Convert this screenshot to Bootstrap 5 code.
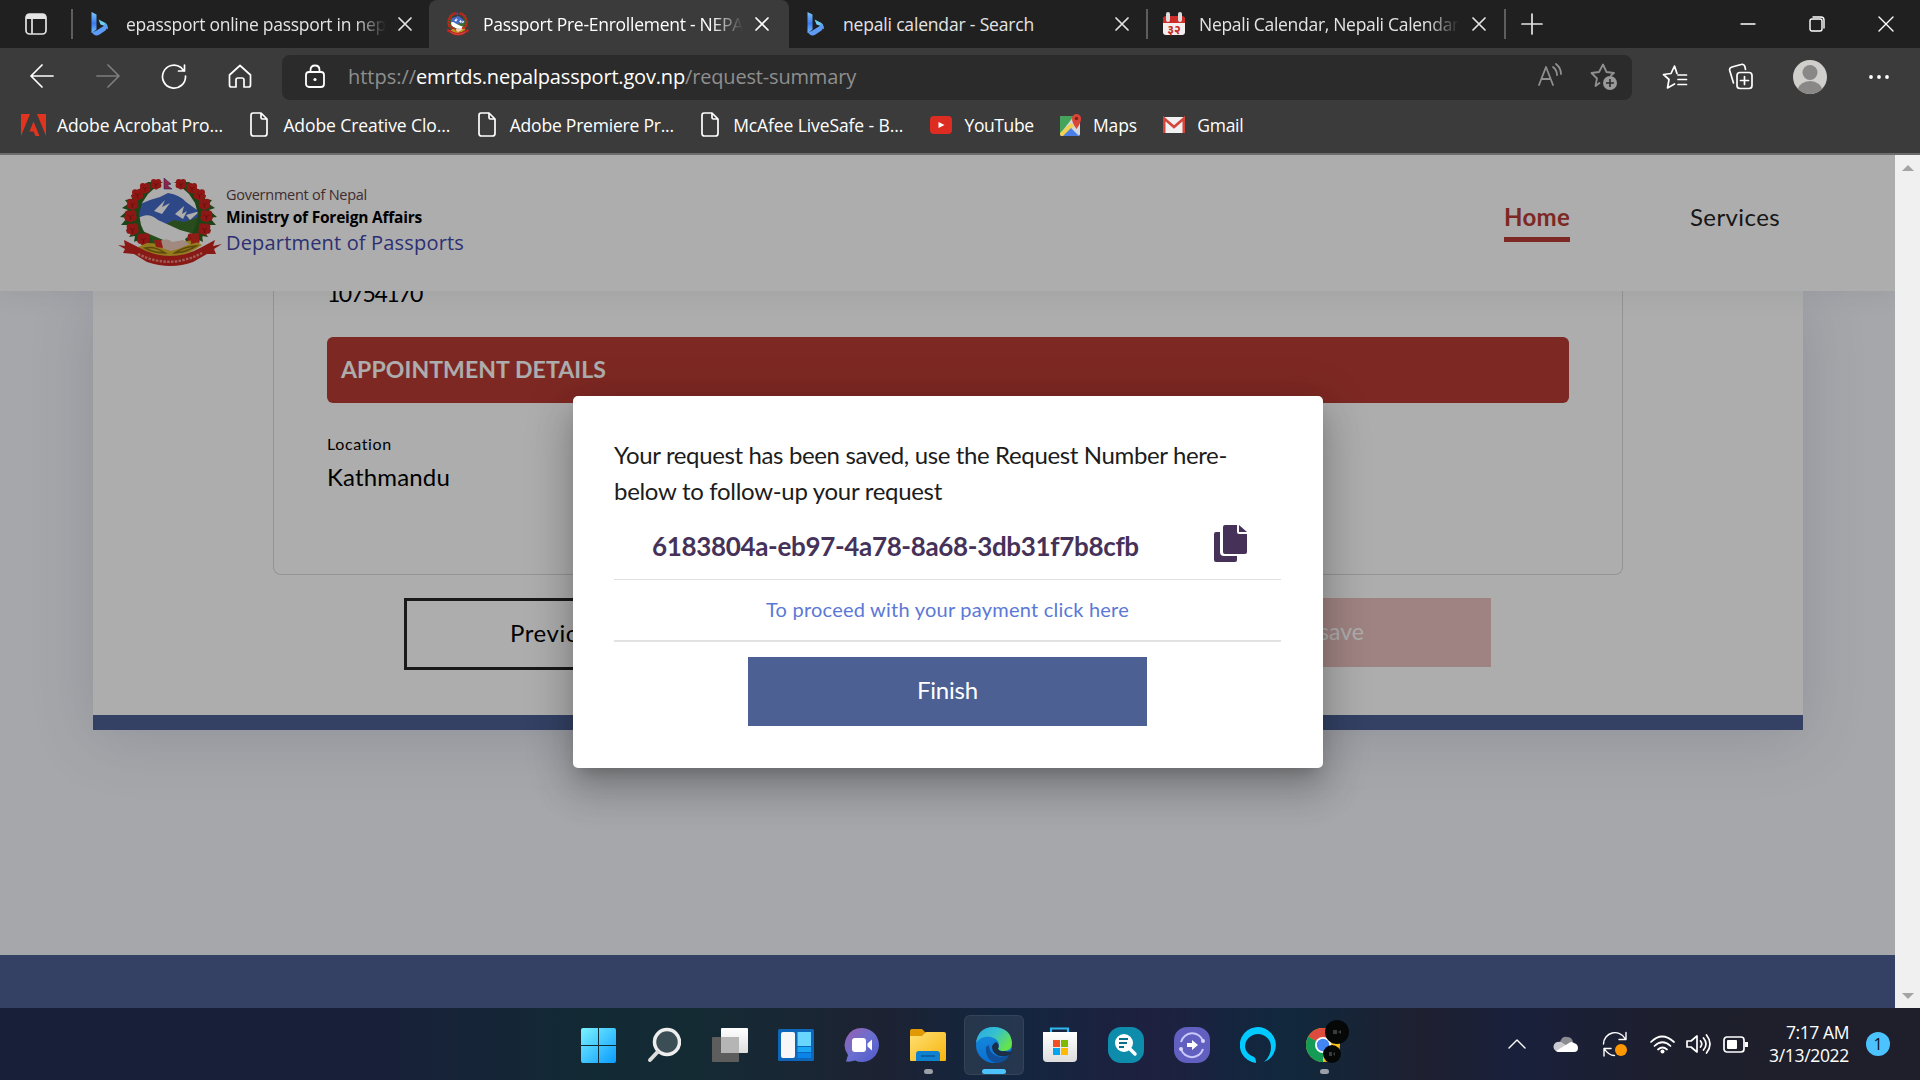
<!DOCTYPE html>
<html lang="en">
<head>
<meta charset="utf-8">
<title>Passport Pre-Enrollement - NEPAL</title>
<link href="https://cdn.jsdelivr.net/npm/bootstrap@5.3.0/dist/css/bootstrap.min.css" rel="stylesheet">
<style>
body{width:1920px;height:1080px;overflow:hidden;font-family:"Open Sans","Noto Sans",sans-serif;background:#f4f6fb}
svg{display:block;flex:none}
.ln{fill:none;stroke:currentColor;stroke-width:1.7;stroke-linecap:round;stroke-linejoin:round}
.thin{stroke-width:1.4}
[data-w]{display:inline-block;white-space:nowrap}
/* browser chrome */
.chrome{height:155px;background:#3b3b3b;border-bottom:2px solid #6c6c6c;color:#fff}
.strip{height:48px;background:#202020;color:#e4e4e4;font-size:17.5px}
.strip-menu{width:71px;padding-left:25px}
.sep{width:2px;height:30px;background:#5d5d5d;flex:none}
.tab{width:357px;height:48px;padding-left:17px}
.tab-first{width:356px}
.tab-on{width:360px;background:#3b3b3b;color:#fff;border-radius:8px 8px 0 0}
.tab-last{width:356px;padding-left:14px}
.fav{width:24px;margin-right:13px}
.tab-title{width:260px;margin-right:12px;overflow:hidden}
.tab-first .fav{margin-right:12px}
.tab-last .tab-title{margin-right:13px}
.fade-end{-webkit-mask-image:linear-gradient(90deg,#000 88%,transparent)}
.winbtn{width:69px}
.tools{height:57px;padding-top:1px}
.tool{width:66px}
.address{width:1350px;height:45px;background:#2b2b2b;border-radius:8px;font-size:20px;color:#8f8f8f;padding-left:22px;margin-left:9px}
.address .ln{stroke-width:1.8}
.address b{font-weight:400;color:#fff}
.marks{height:42px;font-size:17.5px;padding:0 0 2px 21px}
.mark-item{padding-right:26.400px}
/* site */
.viewport{height:853px}
.site{width:1895px;overflow:hidden;font-family:Lato,"Open Sans",sans-serif;color:#000}
.site-head{height:136px;background:#fff;box-shadow:0 3px 24px rgba(40,50,80,.08);z-index:1;padding:0 115px 0 118px}
.brand-text{margin-left:4px;font-family:"Open Sans","Noto Sans",sans-serif;line-height:1}
.gov{font-size:14.5px;color:#5d4348;height:22px}.min{font-size:15.5px;font-weight:700;height:23px}.dep{font-size:20px;color:#4248a9;font-weight:500;height:25px}
.site-nav{font-size:24px;gap:120px;height:42px;margin-top:-3px}
.site-nav a{color:#222;text-decoration:none;line-height:32px;height:41px}
.site-nav a.on{color:#b93b34;font-weight:700;border-bottom:5px solid #b93b34}
.panel{width:1710px;height:439px;margin-left:93px;background:#fff;border-bottom:15px solid #4d6094;box-shadow:0 8px 60px rgba(60,60,100,.16)}
.summary{width:1350px;height:284px;margin-left:180px;border:1px solid #dadada;border-top:0;border-radius:0 0 8px 8px;padding:0 53px}
.fs24{font-size:24px;line-height:30px}
.pass{height:46px;margin-top:-13px;font-size:23px}
.banner{height:66px;margin-top:13px;background:#b93b34;color:#fff;border-radius:6px;font-weight:700;font-size:23px;padding:0 0 2px 14px}
.loc{font-size:16px;line-height:24px;margin-top:29px}
.city{margin-top:6px}
.acts{margin-top:23px}
.prev{width:320px;height:72px;border:3px solid #262626;margin-left:311px;padding:0 0 2px 103px;font-size:24px}
.save{width:320px;height:69px;background:#ebc1c0;color:#fff;padding:0 127px 3px 0;margin-right:312px;font-size:23px}
.foot{height:53px;background:#4d6094}
.shade{position:absolute;inset:0;background:rgba(0,0,0,.32);z-index:2}
.dialog-box{position:absolute;left:573px;top:241px;width:750px;height:372px;z-index:3;background:#fff;border-radius:5px;padding:41px 42px 0 41px;color:#1c1c1c;box-shadow:0 11px 15px -7px rgba(0,0,0,.2),0 24px 38px 3px rgba(0,0,0,.14),0 9px 46px 8px rgba(0,0,0,.12)}
.msg{font-size:24px;line-height:36px;height:72px}
.code-row{height:71px;border-bottom:1px solid #dfdfdf;padding:5px 34px 0 38px}
.code-row span{color:#463259;font-weight:700;font-size:26px}
.pay{height:62px;border-bottom:2px solid #e2e2e2;padding-bottom:2px;color:#5b78d6;font-size:20px}
.finish{width:399px;height:69px;margin:15px auto 0;background:#4d6094;color:#fff;border:0;padding-bottom:4px;font-size:24px}
.scroll{width:25px;background:#f0f0f0;padding:10px 0 9px}
/* taskbar */
.taskbar{height:72px;color:#fff;background:linear-gradient(90deg,#182039 0,#182039 20%,#122a34 31%,#142b34 36%,#1d2233 46%,#12263f 52%,#1e2040 60%,#10283d 67%,#1e2030 74%,#19203b 79%,#1e1f2c 88%,#1e1f2b)}
.apps{margin:2px 0 0 568px;gap:6px}
.app{width:60px;height:60px;border-radius:6px;position:relative}
.app-on{background:#ffffff14;border:1px solid #ffffff12}
.run{position:absolute;bottom:1px;width:9px;height:5px;border-radius:3px;background:#9a9fa8}
.app-on .run{width:24px;background:#4cc2ff;bottom:0}
.tray{padding-right:30px}
.clock{font-size:17.5px;line-height:23px;width:86px;margin-left:15px}
.note{width:24px;height:24px;border-radius:50%;background:#4cc2ff;color:#111;font-size:16px;margin-left:17px}
</style>
<script src="https://cdn.jsdelivr.net/npm/bootstrap@5.3.0/dist/js/bootstrap.bundle.min.js"></script>
</head>
<body class="d-flex flex-column">
<svg width="0" height="0" class="position-absolute">
<defs>
<linearGradient id="bg" x1="0" y1="0" x2="0" y2="1"><stop offset="0" stop-color="#7cc4f7"/><stop offset=".55" stop-color="#3f7bf0"/><stop offset="1" stop-color="#6fc0fb"/></linearGradient>
<linearGradient id="win" x1="0" y1="0" x2="1" y2="1"><stop stop-color="#7af3ff"/><stop offset="1" stop-color="#0a9bff"/></linearGradient>
<linearGradient id="grey" x1="0" y1="0" x2="0" y2="1"><stop stop-color="#fff"/><stop offset="1" stop-color="#ddd"/></linearGradient>
<linearGradient id="chat" x1="0" y1="0" x2="1" y2="1"><stop stop-color="#9a5fae"/><stop offset=".5" stop-color="#6a6fd0"/><stop offset="1" stop-color="#5059c9"/></linearGradient>
<linearGradient id="fold" x1="0" y1="0" x2="1" y2="1"><stop stop-color="#ffdf74"/><stop offset="1" stop-color="#f7b50b"/></linearGradient>
<linearGradient id="edgeA" x1="0" y1="0" x2="1" y2=".6"><stop stop-color="#2aa7e4"/><stop offset=".5" stop-color="#35c1d0"/><stop offset="1" stop-color="#66e34a"/></linearGradient>
<linearGradient id="edgeB" x1="0" y1="0" x2="0" y2="1"><stop offset="0" stop-color="#1790e0"/><stop offset="1" stop-color="#0b6fd0"/></linearGradient>
<symbol id="x" viewBox="0 0 14 14"><path d="M1 1 13 13M13 1 1 13" class="ln"/></symbol>
<symbol id="bing" viewBox="0 0 18 24"><path d="M1 0l5 2.500v15L1 21z" fill="url(#bg)"/><path d="M8 7.500l6.500 3.300q3.500 2.500 2.500 6.700-1-3-4-4l-3-1z" fill="#6ed0ef"/><path d="M1 19.500c2 4.500 5.500 4.500 8 3l6-4c3-3 1.500-7-1.500-7l.5 2L6 18.500q-2 1.500-5 1z" fill="#5d9bf7"/></symbol>
<symbol id="doc" viewBox="0 0 20 26"><path d="M4 1h8l6 6v14.500q0 2.500-2.500 2.500h-11Q2 24 2 21.500V3.500Q2 1 4 1zM12 1v4.500Q12 7 13.500 7H18" class="ln"/></symbol>
<symbol id="bloom" viewBox="-7 -7 14 14"><g fill="#d0231f"><circle cx="-2.200" cy="-2" r="2.900"/><circle cx="2.200" cy="-2.200" r="2.900"/><circle cx="-2.700" cy="1.500" r="2.700"/><circle cx="2.700" cy="1.500" r="2.700"/><circle cy="2.700" r="2.700"/></g><path d="M-2-1l2 2 2-2M0 1v2.500" fill="none" stroke="#8e1512" stroke-width=".8"/></symbol>
<symbol id="wreath" viewBox="0 0 52 90" overflow="visible"><path d="M30 4l-5 3 1 5-6-1-2 5-5 1 1 4-7 1 3 4-6 4 6 2-8 7 7 1-6 7 8 0-3 6 7 0-4 6 6-1-1 6 6-3 1 6 7-3 1 4 3-7-7-5-4-9-2-11 3-11 6-9 9-8 6-4z" fill="#2c6522"/>
<use href="#bloom" x="31" y="-1" width="14" height="14"/><use href="#bloom" x="20" y="3" width="14" height="14"/><use href="#bloom" x="12" y="9" width="15" height="15"/><use href="#bloom" x="7" y="18.500" width="15" height="15"/><use href="#bloom" x="4.500" y="30" width="16" height="16"/><use href="#bloom" x="6.500" y="43" width="16" height="16"/><use href="#bloom" x="17.500" y="53" width="16" height="16"/></symbol>
<symbol id="emblem" viewBox="0 0 104 90">
<path d="M18 37 20 27 32 22 42 19 50 15Q62 17 68 24L86 37 82 47 20 46z" fill="#456ac7"/>
<path d="M36 33l11-11-3 7 8-4-8 11zM57 36l9-8-2 8 5-3-4 8zM68 37l14-4-10 9z" fill="#fff"/>
<path d="M48 46 56 42 66 44 84 38 88 50 84 60 60 52z" fill="#3d702a"/>
<path d="M19 41Q30 33 40 42L62 52 80 57 78 65 42 62 22 52z" fill="#fff"/>
<path d="M18 50Q31 56 50 64L35 68 18 63z" fill="#3d702a"/>
<use href="#wreath" width="52" height="90"/><g transform="translate(101 0) scale(-1 1)"><use href="#wreath" width="52" height="90"/></g>
<path d="M20 69Q52 90 84 67L76 62 50 66 29 65z" fill="#d9b52d"/>
<path d="M27 70q10-2 20 5-11 0-20-5zM57 75q8-6 21-7-9 6-21 7z" fill="none" stroke="#8b6d13" stroke-width="1.600"/>
<path d="M42 63q8-4 12 1l11-2 7 4-12 5-7 2-9-3z" fill="#efcbbb"/><path d="M36 62l7 0 2 8-7-1zM73 56l8-1 0 9-8 2z" fill="#d82c23"/>
<path d="M0 67l7 1-1-6 14 7q32 18 64 0l13-7-2 6 9-2-8 5 2 5-9 0-14 8q-22 8-46 0L16 76 5 75l2-4z" fill="#c9251f"/>
<path d="M20 76q32 16 64-1" fill="none" stroke="#e78b83" stroke-width="2.400" stroke-dasharray="2.500 1.300"/>
<path d="M46 0v11h8l-5-3.500 4-1.500z" fill="#d7335e" stroke="#3a3a9c" stroke-width=".6"/>
</symbol>
</defs></svg>

<header class="chrome flex-shrink-0">
  <div class="strip d-flex align-items-center">
    <div class="strip-menu"><svg width="22" height="22"><rect x="1" y="1" width="20" height="20" rx="3.500" class="ln"/><path d="M1 6V4q0-3 3-3h14q3 0 3 3v2z" fill="#e4e4e4"/><path d="M7 6v14" class="ln"/></svg></div>
    <i class="sep"></i>
    <div class="tab tab-first d-flex align-items-center"><div class="fav"><svg width="19" height="24"><use href="#bing"/></svg></div><div class="tab-title fade-end"><span data-w="260">epassport online passport in nep</span></div><svg width="14" height="14"><use href="#x"/></svg></div>
    <div class="tab tab-on d-flex align-items-center"><div class="fav"><svg width="24" height="24" viewBox="0 0 104 90" preserveAspectRatio="none"><use href="#emblem" width="104" height="90"/></svg></div><div class="tab-title fade-end"><span data-w="260">Passport Pre-Enrollement - NEPA</span></div><svg width="14" height="14"><use href="#x"/></svg></div>
    <div class="tab d-flex align-items-center"><div class="fav"><svg width="19" height="24"><use href="#bing"/></svg></div><div class="tab-title"><span data-w="191">nepali calendar - Search</span></div><svg width="14" height="14"><use href="#x"/></svg></div>
    <i class="sep"></i>
    <div class="tab tab-last d-flex align-items-center"><div class="fav"><svg width="24" height="24"><rect x="1" y="5" width="22" height="18" rx="3" fill="#f4eeee"/><path d="M1 11V7q0-3 3-3h16q3 0 3 3v4z" fill="#cc2c28"/><rect x="4" width="4" height="10" rx="2" fill="#ddd"/><rect x="16" width="4" height="10" rx="2" fill="#ddd"/><text x="12" y="21.500" font-size="12" font-weight="700" text-anchor="middle" fill="#c52a26">३२</text></svg></div><div class="tab-title fade-end"><span data-w="260">Nepali Calendar, Nepali Calendar</span></div><svg width="14" height="14"><use href="#x"/></svg></div>
    <i class="sep"></i>
    <svg width="22" height="22" style="margin-left:15px"><path d="M11 1v20M1 11h20" class="ln"/></svg>
    <div class="d-flex ms-auto text-white">
      <div class="winbtn d-flex justify-content-center align-items-center"><svg width="16" height="16"><path d="M1 8h14" class="ln thin"/></svg></div>
      <div class="winbtn d-flex justify-content-center"><svg width="16" height="16"><rect x="1" y="3" width="12" height="12" rx="2" class="ln thin"/><path d="M4 1h8q3 0 3 3v8" class="ln thin"/></svg></div>
      <div class="winbtn d-flex justify-content-center"><svg width="16" height="16"><path d="M1 1l14 14M15 1 1 15" class="ln thin"/></svg></div>
    </div>
  </div>
  <div class="tools d-flex align-items-center">
    <div class="d-flex" style="padding-left:9px">
      <div class="tool d-flex justify-content-center"><svg width="24" height="24"><path d="M23 12H1M12 1 1 12l11 11" class="ln"/></svg></div>
      <div class="tool d-flex justify-content-center"><svg width="24" height="24" color="#7d7d7d"><path d="M1 12h22M12 1l11 11-11 11" class="ln"/></svg></div>
      <div class="tool d-flex justify-content-center"><svg width="26" height="26"><path d="M24.500 12a11.500 11.500 0 1 1-4.500-8.500L23 7M23.500 1v6h-6" class="ln"/></svg></div>
      <div class="tool d-flex justify-content-center"><svg width="24" height="24"><path d="M1.500 11 12 1.500 22.500 11v10q0 2-2 2h-4.500v-7q0-2-2-2h-4q-2 0-2 2v7H3.500q-2 0-2-2z" class="ln"/></svg></div>
    </div>
    <div class="address d-flex align-items-center">
      <svg width="22" height="26" class="me-4" color="#fff"><rect x="2" y="8" width="18" height="15" rx="3" class="ln"/><path d="M6.500 8V6q0-4.500 4.500-4.500T15.500 6v2" class="ln"/><circle cx="11" cy="15.500" r="1.600" fill="#fff"/></svg>
      <div class="d-flex" style="margin-left:-2px"><span data-w="68">https://</span><b data-w="269">emrtds.nepalpassport.gov.np</b><span data-w="171">/request-summary</span></div>
      <div class="d-flex ms-auto" style="gap:28px;margin-right:14px">
        <svg width="24" height="26"><path d="M1 22 8 4l7 18M3.500 16h9M15 4q4 3 4 8M18 1q5 4 5 10" class="ln"/></svg>
        <svg width="28" height="28"><path d="M9.500 20 5.500 23 7 15.500 1.500 10 9 9l4-7.500L16.500 9l7.500 1-3 2.500" class="ln"/><circle cx="20" cy="20" r="7" fill="#999"/><path d="M20 16v8M16 20h8" stroke="#2b2b2b" stroke-width="1.600"/></svg>
      </div>
    </div>
    <div class="d-flex align-items-center" style="padding-left:10px">
      <div class="tool d-flex justify-content-center"><svg width="26" height="26"><path d="M15 9.500 12.500 2 9 9.500l-7.500 1 5.500 5L5.500 24l7-4M16 11h8.500M16 15.500h8.500M16 20.500h8.500" class="ln"/></svg></div>
      <div class="tool d-flex justify-content-center"><svg width="26" height="28"><rect x="9" y="9.500" width="15" height="16" rx="3" class="ln"/><path d="M16.500 13.500v8M12.500 17.500h8M5.500 20 1.700 7.500Q1 5 4 4l9-2.500q3-1 4 2.500l.5 2.500" class="ln"/></svg></div>
      <div class="tool d-flex justify-content-center" style="margin:0 3px"><svg width="34" height="34"><defs><clipPath id="av"><circle cx="17" cy="17" r="17"/></clipPath></defs><g clip-path="url(#av)"><path d="M0 0h34v34H0z" fill="#d0cfcc"/><circle cx="17" cy="12.500" r="7.500" fill="#8a8886"/><ellipse cx="17" cy="30" rx="12" ry="9" fill="#8a8886"/></g></svg></div>
      <div class="tool d-flex justify-content-center"><svg width="20" height="6" fill="#fff"><circle cx="2" cy="3" r="1.900"/><circle cx="10" cy="3" r="1.900"/><circle cx="18" cy="3" r="1.900"/></svg></div>
    </div>
  </div>
  <nav class="marks d-flex align-items-center">
    <div class="d-flex align-items-center mark-item"><svg width="25" height="22" style="margin-right:11px" fill="#e1341e"><path d="M0 0h9L0 22zM16 0h9v22zM12.500 7.500 18.500 22h-4l-2-4.500H8.500z"/></svg><span data-w="166">Adobe Acrobat Pro...</span></div>
    <div class="d-flex align-items-center mark-item"><svg width="20" height="26" style="margin-right:14px"><use href="#doc"/></svg><span data-w="167">Adobe Creative Clo...</span></div>
    <div class="d-flex align-items-center mark-item"><svg width="20" height="26" style="margin-right:13px"><use href="#doc"/></svg><span data-w="164">Adobe Premiere Pr...</span></div>
    <div class="d-flex align-items-center mark-item"><svg width="20" height="26" style="margin-right:13px"><use href="#doc"/></svg><span data-w="170">McAfee LiveSafe - B...</span></div>
    <div class="d-flex align-items-center mark-item"><svg width="22" height="18" style="margin-right:13px"><rect width="22" height="18" rx="4" fill="#dd2c22"/><path d="M8.500 6v6l6-3z" fill="#fff"/></svg><span data-w="69">YouTube</span></div>
    <div class="d-flex align-items-center mark-item"><svg width="22" height="24" style="margin-right:11px"><rect y="3" width="20" height="20" rx="2" fill="#cfd8dc"/><path d="M0 5q0-2 2-2h12L0 21z" fill="#45a45b"/><path d="M0 20 11 10l3 3L4 23H2q-2 0-2-3z" fill="#f3d04e"/><path d="M3 23 11 15l8 8z" fill="#4a7fe8"/><path d="M16.500 16q-4.500-6-4.500-10.500a4.500 4.500 0 0 1 9 0q0 4.500-4.500 10.500z" fill="#dc4437"/><circle cx="16.500" cy="5.500" r="1.700" fill="#7b231d"/></svg><span data-w="44">Maps</span></div>
    <div class="d-flex align-items-center"><svg width="22" height="18" style="margin-right:12px"><rect y="1" width="22" height="16" rx="2" fill="#f1f1f1"/><path d="M1.200 17V2.500L11 11l9.800-8.500V17" fill="none" stroke="#d5453a" stroke-width="2.600"/></svg><span data-w="46">Gmail</span></div>
  </nav>
</header>

<main class="viewport d-flex position-relative flex-shrink-0">
  <div class="site d-flex flex-column position-relative">
    <div class="site-head d-flex align-items-center justify-content-between position-relative">
      <div class="d-flex align-items-center"><svg width="104" height="90"><use href="#emblem"/></svg>
        <div class="brand-text"><div class="gov"><span data-w="141">Government of Nepal</span></div><div class="min"><span data-w="196">Ministry of Foreign Affairs</span></div><div class="dep"><span data-w="238">Department of Passports</span></div></div></div>
      <nav class="site-nav d-flex"><a href="#" class="on"><span data-w="66">Home</span></a><a href="#"><span data-w="90">Services</span></a></nav>
    </div>
    <section class="panel d-flex flex-column">
      <div class="summary">
        <div class="pass fs24"><span data-w="95">10754170</span></div>
        <div class="banner d-flex align-items-center"><span data-w="265">APPOINTMENT DETAILS</span></div>
        <div class="loc"><span data-w="65">Location</span></div>
        <div class="fs24 city"><span data-w="123">Kathmandu</span></div>
      </div>
      <div class="acts d-flex justify-content-between">
        <div class="prev d-flex align-items-center"><span data-w="95">Previous</span></div>
        <div class="save d-flex align-items-center justify-content-end"><span data-w="45">save</span></div>
      </div>
    </section>
    <div class="foot mt-auto"></div>
    <div class="shade"></div>
    <div class="dialog-box">
      <div class="msg"><span data-w="613">Your request has been saved, use the Request Number here-</span><br><span data-w="328">below to follow-up your request</span></div>
      <div class="code-row d-flex align-items-center justify-content-between"><span data-w="487">6183804a-eb97-4a78-8a68-3db31f7b8cfb</span><svg width="33" height="37" viewBox="0 0 33 37" fill="#463259" style="margin-bottom:6px"><path d="M0 9Q0 7 2 7h4v20q0 4 4 4h13v4q0 2-2 2H2q-2 0-2-2z"/><path d="M9 2q0-2 2-2h12v7q0 2 2 2h8v18q0 2-2 2H11q-2 0-2-2zM25 0l8 7h-8z"/></svg></div>
      <div class="pay d-flex align-items-center justify-content-center"><span data-w="363">To proceed with your payment click here</span></div>
      <button class="finish d-flex align-items-center justify-content-center"><span data-w="61">Finish</span></button>
    </div>
  </div>
  <div class="scroll d-flex flex-column justify-content-between align-items-center"><svg width="12" height="6"><path d="M0 6 6 0l6 6z" fill="#a3a3a3"/></svg><svg width="12" height="6"><path d="M0 0l6 6 6-6z" fill="#a3a3a3"/></svg></div>
</main>

<footer class="taskbar d-flex align-items-center flex-shrink-0">
  <div class="apps d-flex">
    <div class="app d-flex align-items-center justify-content-center"><svg width="35" height="35" fill="url(#win)"><path d="M2 0h15v17H0V2q0-2 2-2zM18 0h15q2 0 2 2v15H18zM0 18h17v17H2q-2 0-2-2zM18 18h17v15q0 2-2 2H18z"/></svg></div>
    <div class="app d-flex align-items-center justify-content-center"><svg width="34" height="36"><circle cx="20" cy="15" r="12.500" fill="#3b4d55" stroke="#eee" stroke-width="3.500"/><path d="M10.500 25 3 33" stroke="#ddd" stroke-width="4" stroke-linecap="round"/></svg></div>
    <div class="app d-flex align-items-center justify-content-center"><svg width="36" height="36"><rect x="9" y="1" width="27" height="25" rx="1" fill="url(#grey)"/><rect y="10" width="27" height="25" rx="1" fill="#5d5d5d"/><path d="M9 10h18v16H9z" fill="#b5b5b5"/></svg></div>
    <div class="app d-flex align-items-center justify-content-center"><svg width="36" height="32"><rect width="36" height="32" rx="1.500" fill="#0d66b8"/><rect x="3" y="3" width="14" height="26" rx="2" fill="#f7f7f7"/><path d="M19.500 3h13.500v14H19.500z" fill="#69d6ff"/><path d="M19.500 18h13.500v5H19.500z" fill="#1aa6f5"/><path d="M19.500 24h13.500v5H19.500z" fill="#0a84e8"/></svg></div>
    <div class="app d-flex align-items-center justify-content-center"><svg width="36" height="36"><path d="M18 1a17 17 0 1 1-7 32.500Q7 35 2 34.500L4 28A17 17 0 0 1 18 1z" fill="url(#chat)"/><rect x="8" y="11" width="14" height="14" rx="3" fill="#fff"/><path d="M23.500 16.500l4.500-4v11l-4.500-4z" fill="#fff"/></svg></div>
    <div class="app d-flex align-items-center justify-content-center"><svg width="36" height="34"><path d="M0 3q0-2 2-2h10l4 4v8H0z" fill="#e19a04"/><path d="M0 8h12l4-4h18q2 0 2 2v26q0 1-1 1H1q-1 0-1-1z" fill="url(#fold)"/><path d="M6 33V26q0-3 3-3h18q3 0 3 3v7z" fill="#1081cf"/><path d="M11 28h14" stroke="#0a5797" stroke-width="1.500"/></svg><i class="run"></i></div>
    <div class="app app-on d-flex align-items-center justify-content-center"><svg width="36" height="36"><circle cx="18" cy="18" r="18" fill="url(#edgeB)"/><path d="M13 18q0 10 12 12 5 0 9-3-4 9-14 9Q9 33 10 20z" fill="#104f9a"/><path d="M0 16Q2 0 18 0 35 1 36 16q0 8-8 8-5 0-6-2 1-2 1-4 0-6-8-8Q6 8 0 16z" fill="url(#edgeA)"/><path d="M36 24q0 2-2 4-12 4-17-4-3-6 3-9 4 2 2 7 2 3 7 2 4 1 7 0z" fill="#1d2f48"/></svg><i class="run"></i></div>
    <div class="app d-flex align-items-center justify-content-center"><svg width="36" height="36"><path d="M9 7V1.500h17V7" fill="none" stroke="#31b8ef" stroke-width="2.200"/><path d="M1 5h34v26q0 4-4 4H5q-4 0-4-4z" fill="url(#grey)"/><path d="M11 13h7v7h-7z" fill="#f25022"/><path d="M19 13h7v7h-7z" fill="#7fba00"/><path d="M11 21h7v7h-7z" fill="#00a4ef"/><path d="M19 21h7v7h-7z" fill="#ffb900"/></svg></div>
    <div class="app d-flex align-items-center justify-content-center"><svg width="36" height="36"><rect width="36" height="36" rx="13" fill="#0d8dab"/><circle cx="16" cy="16" r="9" fill="#fff"/><path d="M22 22l5 5" stroke="#fff" stroke-width="3.500" stroke-linecap="round"/><path d="M11 12h9M11 16h8M11 20h5" stroke="#0d6f87" stroke-width="2"/></svg></div>
    <div class="app d-flex align-items-center justify-content-center"><svg width="36" height="36"><rect width="36" height="36" rx="13" fill="#615fc0"/><path d="M7 15A11.500 11.500 0 0 1 29 14M29 22A11.500 11.500 0 0 1 7 22" fill="none" stroke="#c9c8fb" stroke-width="2"/><circle cx="29" cy="14" r="2" fill="#d7d6ff"/><circle cx="7" cy="22" r="2" fill="#d7d6ff"/><path d="M13 16h5v-3l6 5-6 5v-3h-5z" fill="#fff"/></svg></div>
    <div class="app d-flex align-items-center justify-content-center"><svg width="36" height="36"><path d="M16 36A18 18 0 1 1 24 35Q31 29 31 20A13 13 0 1 0 5 20Q6 27 14 30 16 31 16 36z" fill="#00caff"/></svg></div>
    <div class="app d-flex align-items-center justify-content-center"><svg width="60" height="60"><circle cx="29" cy="30" r="17" fill="#fbc116"/><path d="M29 30 14.300 21.500A17 17 0 0 1 43.700 21.500z" fill="#dc4b3d"/><path d="M29 30 14.300 21.500A17 17 0 0 0 29 47z" fill="#159b55"/><circle cx="29" cy="30" r="8" fill="#fff"/><circle cx="29" cy="30" r="6.200" fill="#4285f4"/><circle cx="43" cy="17" r="12" fill="#060808"/><circle cx="38" cy="39" r="9" fill="#060808"/><path d="M39 15h4v4h-4zM44 17l3-2v4zM35 37h3v4h-3zM39 39l2-2v4z" fill="#3c3c3c"/></svg><i class="run"></i></div>
  </div>
  <div class="tray d-flex align-items-center ms-auto">
    <svg width="18" height="10" style="margin-right:27px"><path d="M1 9l8-8 8 8" class="ln thin"/></svg>
    <svg width="25" height="17" style="margin-right:24px"><path d="M7 6Q9 0 14 1q5 0 6 5l-8 6z" fill="#8b8b92"/><path d="M5 16Q0 14 .500 10 2 5 8 6l13 8z" fill="#c9c9ce"/><path d="M3 15 16 7q2-2 5 0 4 1 4 5 0 4-4 4H5z" fill="#fff"/></svg>
    <svg width="26" height="26" style="margin-right:22px"><path d="M1.500 13A11.500 11.500 0 0 1 23 7.500M24 1.500v7h-7M2 25v-7.500h7M2.500 18q4 6.500 10 6.500" class="ln thin"/><circle cx="19" cy="19" r="6" fill="#ff9800"/></svg>
    <svg width="25" height="19" style="margin-right:11px"><path d="M1 7q11-11 23 0M4.500 11q8-7.500 16 0M8 14.500q4.500-4 9 0" class="ln"/><circle cx="12.500" cy="16.500" r="2" fill="#fff"/></svg>
    <svg width="25" height="22" style="margin-right:12px"><path d="M1 8h4l6-5v16l-6-5H1zM14.500 8q2.500 3 0 6M17.500 5q5 6 0 12M20.500 2q7 9 0 18" class="ln"/></svg>
    <svg width="25" height="17"><rect x="1" y="1" width="20" height="15" rx="3" class="ln"/><rect x="4" y="4" width="10" height="9" rx="1" fill="#fff"/><path d="M23.500 6v5" stroke="#fff" stroke-width="3"/></svg>
    <div class="clock text-end"><span data-w="63">7:17 AM</span><br><span data-w="80">3/13/2022</span></div>
    <div class="note d-flex align-items-center justify-content-center">1</div>
  </div>
</footer>
<script>
// Spread each label's letters so that it fills its data-w width.
document.querySelectorAll('[data-w]').forEach(function (el) {
  var natural = el.getBoundingClientRect().width;
  var gap = (el.dataset.w - natural) / el.textContent.length;
  el.style.letterSpacing = gap.toFixed(3) + 'px';
});
</script>
</body>
</html>
